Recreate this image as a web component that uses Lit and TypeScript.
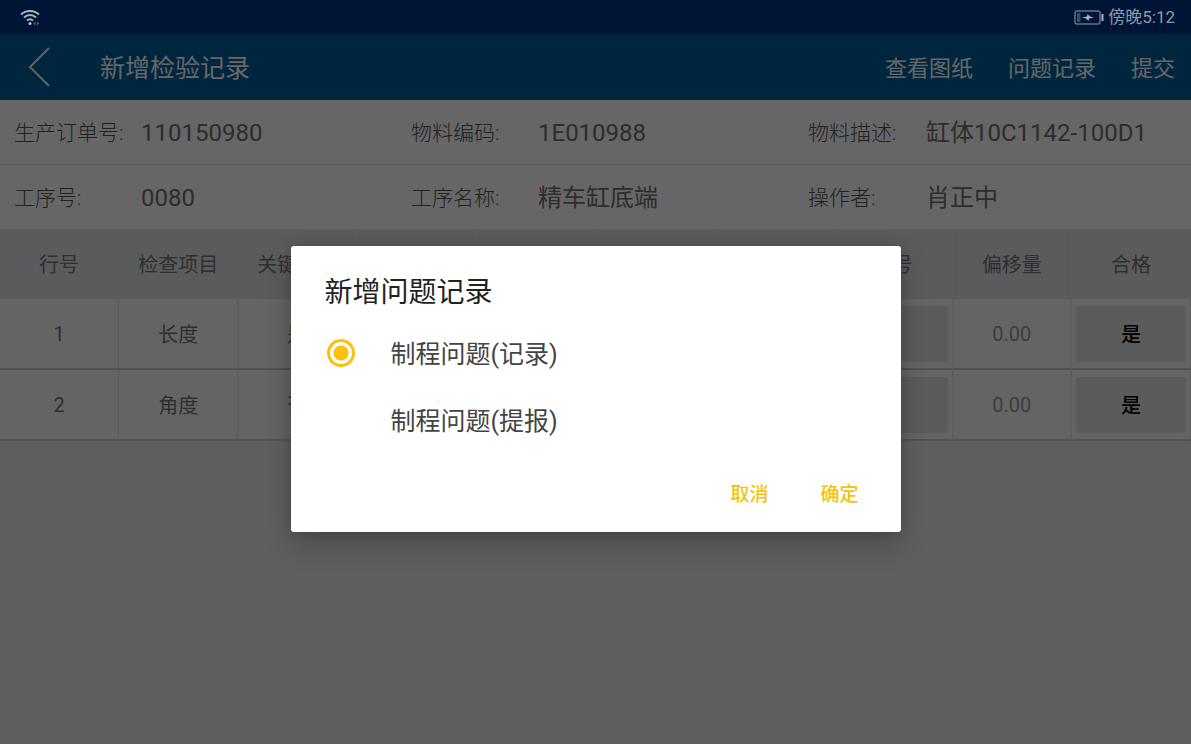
import { LitElement, html, css, svg } from "lit";
import { customElement, state } from "lit/decorators.js";

interface Field { label: string; value: string; }
interface Row { no: number; item: string; key: string; }

const FIELDS: Field[][] = [
  [
    { label: "生产订单号:", value: "110150980" },
    { label: "物料编码:", value: "1E010988" },
    { label: "物料描述:", value: "缸体10C1142-100D1" },
  ],
  [
    { label: "工序号:", value: "0080" },
    { label: "工序名称:", value: "精车缸底端" },
    { label: "操作者:", value: "肖正中" },
  ],
];

const COLUMNS = ["行号", "检查项目", "关键特性", "", "", "", "", "编号", "偏移量", "合格"];

const ROWS: Row[] = [
  { no: 1, item: "长度", key: "是" },
  { no: 2, item: "角度", key: "否" },
];

const OPTIONS = ["制程问题(记录)", "制程问题(提报)"];

@customElement("app-root")
export class AppRoot extends LitElement {
  @state() private selected = 0;

  static styles = css`
    :host {
      display: block;
      position: relative;
      min-height: 100vh;
      background: #ededed;
      color: #777;
      font-family: Roboto, "Noto Sans CJK SC", sans-serif;
    }
    * { box-sizing: border-box; }
    button {
      font: inherit;
      color: inherit;
      border: 0;
      padding: 0;
      background: none;
      cursor: pointer;
    }
    svg { display: block; }

    /* The system status bar stays above the dimming layer. */
    .status {
      position: relative;
      z-index: 1;
      display: flex;
      align-items: center;
      justify-content: space-between;
      height: 34px;
      padding: 0 16px 0 20px;
      background: #001535;
      color: #8f99a9;
      font-size: 17px;
      line-height: 24px;
    }
    .clock { display: flex; align-items: center; gap: 4px; }

    .bar {
      display: flex;
      align-items: center;
      height: 66px;
      padding: 0 16px 0 20px;
      background: #005d9e;
      color: #fff;
    }
    .title { flex: 1; margin: 0 0 0 40px; padding-top: 4px; font-size: 25px; line-height: 36px; font-weight: 400; }
    .actions { display: flex; gap: 35px; padding-top: 4px; font-size: 22px; line-height: 32px; }

    .fields {
      display: grid;
      grid-template-columns: repeat(3, 1fr);
      align-items: center;
      height: 65px;
      margin: 0;
      padding-top: 2px;
      background: #fff;
      border-bottom: 1px solid #ececec;
    }
    .field { display: flex; align-items: center; padding-left: 14px; }
    .label { width: 127px; font-size: 21px; line-height: 32px; font-weight: 300; color: #555; }
    .field:last-child .label { width: 118px; }
    .value { margin: 0; font-size: 24px; line-height: 32px; color: #707070; white-space: nowrap; }

    .grid { width: 100%; table-layout: fixed; border-collapse: separate; border-spacing: 0; }
    .grid th {
      height: 69px;
      padding: 0 0 2px;
      background: #e2e4e8;
      border-right: 1px solid #e6e8eb;
      font-size: 20px;
      font-weight: 400;
      color: #777;
    }
    .grid td {
      height: 71px;
      padding: 6px 4px;
      background: #fafafa;
      border-right: 1px solid #e6e6e6;
      border-bottom: 2px solid #cacaca;
      font-size: 20px;
      color: #777;
      text-align: center;
    }
    .grid .offset { color: #9a9a9a; }
    .cell-btn { display: block; width: 100%; height: 56px; border-radius: 3px; background: #dfe3e6; color: #000; font-weight: 500; }

    .overlay {
      position: absolute;
      inset: 0;
      display: flex;
      align-items: center;
      justify-content: center;
      padding-top: 34px;
      background: rgba(0, 0, 0, 0.6);
    }
    .dialog {
      width: 610px;
      max-width: 90%;
      padding: 26px 34px 16px;
      border-radius: 3px;
      background: #fff;
      color: #444;
      box-shadow: 0 12px 28px rgba(0, 0, 0, 0.24), 0 0 10px rgba(0, 0, 0, 0.12);
    }
    .heading { margin: 0 0 6px; padding-top: 1px; font-size: 28px; line-height: 40px; font-weight: 400; color: #222; }
    .option { display: flex; align-items: center; gap: 36px; height: 67px; padding-left: 2px; font-size: 25px; line-height: 36px; cursor: pointer; }
    .option span { padding-top: 4px; }
    .radio {
      appearance: none;
      width: 28px;
      height: 28px;
      margin: 0;
      border-radius: 50%;
    }
    .radio:checked { border: 3px solid #fcc10f; background: radial-gradient(circle, #fcc10f 7px, transparent 8px); }
    .buttons { display: flex; justify-content: flex-end; gap: 36px; margin-top: 15px; color: #f5c400; font-size: 19px; font-weight: 500; }
    .buttons button { height: 48px; padding: 0 8px; }
  `;

  render() {
    return html`
      <div class="status">
        ${svg`<svg width="20" height="17" viewBox="0 0 20 17" fill="none" stroke="#a9b4c2" stroke-width="2">
          <path d="M1 5.5C6 .8 14 .8 19 5.5M4 8.5C7.500 5.300 12.500 5.300 16 8.500M7 11.500C9 9.800 11 9.800 13 11.500"/>
          <circle cx="10" cy="14.500" r="1.500" fill="#c4ccd6" stroke="none"/>
          <path d="M15.500 12.500l-2 2 2 2zM17 12.500l2 2-2 2z" fill="#5d6a80" stroke="none"/></svg>`}
        <div class="clock">
          ${svg`<svg width="30" height="15" viewBox="0 0 30 15"><rect x="1" y="1" width="25" height="13" rx="2" fill="none" stroke="#67738a" stroke-width="1.500"/>
            <rect x="3" y="3" width="3.500" height="9" fill="#3f4b63"/><path d="M8 7.500l5-1 .5-2.500 2.500 2.500 4 1-5 1-.5 2.500-2.500-2.500z" fill="#a9b4c2"/><path d="M28.500 4v7" stroke="#a9b4c2" stroke-width="2"/></svg>`}
          <span>傍晚5:12</span>
        </div>
      </div>
      <header class="bar">
        <button aria-label="返回">
          ${svg`<svg width="40" height="40" viewBox="0 0 40 40" fill="none" stroke="#f4f4f4" stroke-width="2"><path d="M29 1L10 20L29 39"/></svg>`}
        </button>
        <h1 class="title">新增检验记录</h1>
        <nav class="actions">
          <button>查看图纸</button><button>问题记录</button><button>提交</button>
        </nav>
      </header>
      ${FIELDS.map((line) => html`<dl class="fields">
        ${line.map((f) => html`<div class="field"><dt class="label">${f.label}</dt><dd class="value">${f.value}</dd></div>`)}
      </dl>`)}
      <table class="grid">
        <thead><tr>${COLUMNS.map((c) => html`<th scope="col">${c}</th>`)}</tr></thead>
        <tbody>
          ${ROWS.map((r) => html`<tr>
            <td>${r.no}</td><td>${r.item}</td><td>${r.key}</td>
            <td></td><td></td><td></td><td></td>
            <td><button class="cell-btn" aria-label="选择编号"></button></td>
            <td class="offset">0.00</td>
            <td><button class="cell-btn">是</button></td>
          </tr>`)}
        </tbody>
      </table>
      <div class="overlay">
        <form class="dialog" role="dialog" aria-modal="true" aria-labelledby="heading" @submit=${(e: Event) => e.preventDefault()}>
          <h2 class="heading" id="heading">新增问题记录</h2>
          ${OPTIONS.map((o, i) => html`<label class="option">
            <input class="radio" type="radio" name="kind" .checked=${this.selected === i} @change=${() => (this.selected = i)} />
            <span>${o}</span>
          </label>`)}
          <div class="buttons"><button type="button">取消</button><button type="submit">确定</button></div>
        </form>
      </div>
    `;
  }
}
